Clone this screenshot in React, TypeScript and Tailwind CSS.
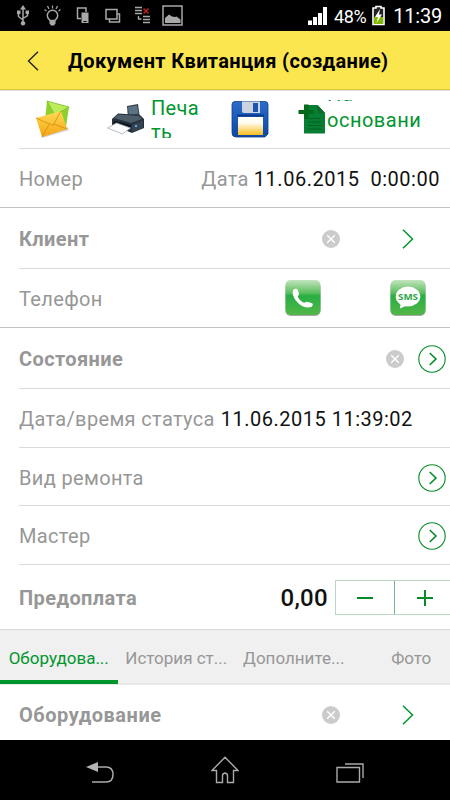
import type { ReactNode } from "react"
import clsx from "clsx"

function StatusBar() {
  return (
    <div className="flex h-[31px] items-center bg-black pl-[15px] pr-2 text-white">
      <svg width="170" height="31" viewBox="0 0 170 31" fill="none" stroke="#a8a8a8" strokeWidth="1.5">
        <path d="M8 8v15M3.500 13v3.500l4.500 3.500M12.500 12v3.500L8 18.500" />
        <path d="M8 5l3 4.500H5z" fill="#a8a8a8" stroke="none" />
        <circle cx="8" cy="23.200" r="2.200" fill="#a8a8a8" stroke="none" />
        <path d="M2 10.500h3.500v3.500H2zM10.500 10.500h3.500v3.500h-3.500z" fill="#a8a8a8" stroke="none" />
        <path d="M35 20.500c-1-1.500-2.700-2.300-2.700-5a5.200 5.200 0 0 1 10.400 0c0 2.700-1.700 3.500-2.700 5z" />
        <path d="M34.500 20.500h6v3l-1.500 2h-3l-1.500-2z" fill="#a8a8a8" stroke="none" />
        <path d="M37.500 5.500v3M32.500 6l1.500 3M42.500 6L41 9M29.500 9.500l2 1.500M45.500 9.500l-2 1.500" strokeWidth="1.200" />
        <path d="M66 18.500h-3.500V8h8.500v4" />
        <path d="M66.500 12.500h7v10.500h-7z" fill="#a8a8a8" stroke="none" />
        <path d="M68.500 21.500h3" stroke="#000" strokeWidth="1" />
        <path d="M91 9.500h11V19H91zM102.500 14h2v8h-10v-2.500" />
        <path d="M120 7.500h7M120 10.500h7M120 13.500h7M128 16.500h7M128 19.500h7M128 22.500h7M123.500 16v3h3" strokeWidth="1.400" />
        <path d="M128.500 8.500l5 5M133.500 8.500l-5 5" stroke="#d32020" strokeWidth="1.300" />
        <path d="M148 6h19v19h-19z" />
        <path d="M150 23v-5l4-3.500 3 2 3 .5 1.500-.5 4 3v3.500z" fill="#a8a8a8" stroke="none" />
      </svg>
      <svg className="ml-auto" width="20" height="31" viewBox="0 0 20 31" fill="#fff">
        <path d="M0 20.500h4V25H0zM5 17h4v8H5zM10 13h4v12h-4zM15 7h4v18h-4z" />
      </svg>
      <span className="ml-[6px] pt-px text-[18px] leading-[31px] tracking-[-0.400px]">48%</span>
      <svg className="ml-[6px]" width="13" height="31" viewBox="0 0 13 31">
        <path d="M1 8h3V6.500h5V8h3v16.500H1z" fill="#222" stroke="#fff" strokeWidth="1.600" />
        <path d="M2 17h9v7H2z" fill="#7fba00" />
        <path d="M8 9l-5 8h3l-1.500 6L10 14.500H7z" fill="#fff" />
      </svg>
      <span className="ml-[8px] pt-[2px] text-[20px] leading-[31px] tracking-[-0.200px]">11:39</span>
    </div>
  )
}

function MailIcon() {
  return (
    <svg width="36" height="40" viewBox="0 0 36 40">
      <defs>
        <linearGradient id="env-y" x1="0" y1="0" x2="0" y2="1">
          <stop offset="0" stopColor="#ffdc55" />
          <stop offset="1" stopColor="#f6a313" />
        </linearGradient>
      </defs>
      <path d="M12 1l22 6-3 20-21-6z" fill="#8ed02e" />
      <path d="M12 1l22 6-14 8z" fill="#bcec5c" stroke="#6fae20" strokeWidth=".6" />
      <path d="M7 38l27-8-1.500-3L8 34z" fill="#777" opacity=".35" />
      <path d="M1 18l25-7 6 18-25 8z" fill="url(#env-y)" />
      <path d="M1 18l17 7.500L26 11M7 37l7-12.500M32 29l-13-5" fill="none" stroke="#d18a0c" strokeWidth=".8" />
    </svg>
  )
}

function PrinterIcon() {
  return (
    <svg width="38" height="40" viewBox="0 0 38 40">
      <path d="M20 6l11-2 2 14-12 1z" fill="#35444f" />
      <path d="M21 7l9-1.500 1.500 8-9.500 1.500z" fill="#5c7385" />
      <path d="M5 19l6-5.500 22 1.500 4 4v9l-12 5-20-8z" fill="#24303b" />
      <path d="M7 18l4-3.500 21 1.500 3 3-11 4z" fill="#4d5e6b" />
      <path d="M8 21l16 4v3L6 24z" fill="#0c1218" />
      <path d="M25 25l11-5v8l-11 4z" fill="#33434f" />
      <circle cx="29" cy="26" r="1.200" fill="#58a9e0" />
      <path d="M.500 28l9-5 14 5-8 6z" fill="#fbfdff" stroke="#9fb0bd" strokeWidth=".8" />
    </svg>
  )
}

function SaveIcon() {
  return (
    <svg width="38" height="40" viewBox="0 0 38 40">
      <defs>
        <linearGradient id="disk" x1="0" y1="0" x2="0" y2="1">
          <stop offset="0" stopColor="#2c6cc8" />
          <stop offset="1" stopColor="#0c48a4" />
        </linearGradient>
        <linearGradient id="disk-label" x1="0" y1="0" x2="0" y2="1">
          <stop offset=".3" stopColor="#fffef4" />
          <stop offset="1" stopColor="#f7bd1e" />
        </linearGradient>
      </defs>
      <path d="M4 1.500h30q3 0 3 3V34l-3 3H5q-4 0-4-4V4.500q0-3 3-3z" fill="url(#disk)" stroke="#123f86" strokeWidth=".8" />
      <path d="M11 1.500h18V13H13q-2 0-2-2z" fill="#ccd4df" />
      <path d="M22 3h5v9h-5z" fill="#1c54ae" />
      <path d="M7 17h25v18H7z" fill="url(#disk-label)" />
      <path d="M6 15.500h27" stroke="#0a3a8c" strokeWidth="2" />
    </svg>
  )
}

function BasedOnIcon() {
  return (
    <svg width="29" height="34" viewBox="0 0 29 34">
      <path d="M6 3h13.500l7.500 8v20.500H6z" fill="#067f35" />
      <path d="M19.500 3v8H27z" fill="#0c6a2a" />
      <path d="M10 16.500h12M10 20h13M10 23.500h13M10 27h13" stroke="#045f24" strokeWidth="1.200" />
      <path d="M6 2.500h4.500v5.500h5v4h-5v5H6v-5H.500V8H6z" fill="#066a1c" />
    </svg>
  )
}

function ClearIcon({ className }: { className?: string }) {
  return (
    <svg className={className} width="18" height="18" viewBox="0 0 18 18">
      <circle cx="9" cy="9" r="9" fill="#cbcbcb" />
      <path d="M5.200 5.200l7.600 7.600M12.800 5.200l-7.600 7.600" stroke="#fff" strokeWidth="1.500" />
    </svg>
  )
}

function Chevron({ className }: { className?: string }) {
  return (
    <svg className={className} width="12" height="20" viewBox="0 0 12 20" fill="none" stroke="#00962e" strokeWidth="1.500">
      <path d="M1 .7L10.500 10 1 19.300" />
    </svg>
  )
}

function RoundChevron({ className }: { className?: string }) {
  return (
    <svg className={className} width="28" height="28" viewBox="0 0 28 28" fill="none" stroke="#058c27">
      <circle cx="14" cy="14" r="13.200" strokeWidth="1.100" />
      <path d="M11.700 8l6.300 6-6.300 6" strokeWidth="1.600" />
    </svg>
  )
}

function CallIcon() {
  return (
    <svg width="36" height="38" viewBox="0 0 36 38">
      <defs>
        <linearGradient id="app-green" x1="0" y1="0" x2="0" y2="1">
          <stop offset="0" stopColor="#c3e4be" />
          <stop offset=".38" stopColor="#58bc5b" />
          <stop offset=".45" stopColor="#27ae43" />
          <stop offset="1" stopColor="#52b748" />
        </linearGradient>
      </defs>
      <rect x=".5" y="2" width="35" height="34" rx="5" fill="#8b8b8b" opacity=".75" />
      <rect x=".5" y="0" width="35" height="35" rx="5" fill="url(#app-green)" />
      <path d="M8.500 9.500c2-1.300 4-1 4.500 1l1 3.500c.3 1.200-1.500 1.800-1 3 1 2.500 3 4.500 5.500 5.500 1.500.7 2-1 3.500-.8l4.500 1.200c2 .6 1.400 2.800 0 3.800-4 2-10 0-13.500-3.700S6 13.500 8.500 9.500z" fill="#fff" />
    </svg>
  )
}

function SmsIcon() {
  return (
    <svg width="36" height="38" viewBox="0 0 36 38">
      <rect x=".5" y="2" width="35" height="34" rx="5" fill="#8b8b8b" opacity=".75" />
      <rect x=".5" y="0" width="35" height="35" rx="5" fill="url(#app-green)" />
      <ellipse cx="18" cy="16.500" rx="12.300" ry="10" fill="#fff" />
      <path d="M10.500 23.500l-.5 5 7-3z" fill="#fff" />
      <text x="18" y="19.800" textAnchor="middle" fontFamily="Open Sans, sans-serif" fontSize="9.500" fontWeight="700" fill="#2fa845" textLength="20" lengthAdjust="spacingAndGlyphs">
        SMS
      </text>
    </svg>
  )
}

type RowProps = {
  label: string
  bold?: boolean
  // full rows close a section, the others have an inset divider
  full?: boolean
  className: string
  children?: ReactNode
}

function Row({ label, bold, full, className, children }: RowProps) {
  return (
    <div className={clsx("shrink-0", full ? "border-b border-[#c4c4c4] pl-[19px]" : "ml-[19px] border-b border-[#dadada]", className)}>
      <div className="flex h-full items-center pt-[2px]">
        <span className={clsx("whitespace-nowrap text-[#979797]", bold ? "font-bold tracking-[0.400px]" : "tracking-[0.350px]")}>{label}</span>
        {children}
      </div>
    </div>
  )
}

const tabs = ["Оборудова...", "История ст...", "Дополните...", "Фото"]

export default function App() {
  return (
    <div className="flex h-[800px] w-[450px] flex-col overflow-hidden bg-white font-['Roboto',sans-serif] text-[20px] leading-6">
      <StatusBar />

      <header className="flex h-[59px] shrink-0 items-center border-b border-[#e5c93c] bg-[#fce650] pl-[27px] pt-[2px]">
        <svg width="12" height="20" viewBox="0 0 12 20" fill="none" stroke="#222" strokeWidth="1.400">
          <path d="M11 .7L1.500 10l9.500 9.300" />
        </svg>
        <h1 className="ml-[29px] whitespace-nowrap text-[20px] font-bold tracking-[0.360px] text-black">Документ Квитанция (создание)</h1>
      </header>

      <div className="h-[59px] shrink-0 border-t border-[#dcdcdc]">
        <div className="ml-[19px] flex h-full items-start border-b border-[#dadada] pt-[9px]">
          <div className="ml-4">
            <MailIcon />
          </div>
          <div className="ml-[36px] flex">
            <PrinterIcon />
            <div className="ml-[6px] h-[38px] w-[56px] overflow-hidden break-all leading-[24px] tracking-[0.350px] text-[#00962e]">
              <div className="-mt-[4px]">Печать</div>
            </div>
          </div>
          <div className="ml-[24px]">
            <SaveIcon />
          </div>
          <div className="ml-[29px] flex">
            <div className="pt-[2px]">
              <BasedOnIcon />
            </div>
            <div className="h-[38px] w-[100px] overflow-hidden whitespace-nowrap leading-[26px] tracking-[0.500px] text-[#00962e]">
              <div className="-mt-[19px]">
                На
                <br />
                основани
              </div>
            </div>
          </div>
        </div>
      </div>

      <Row label="Номер" full className="h-[59px]">
        <span className="ml-auto tracking-[0.350px] text-[#979797]">Дата</span>
        <span className="ml-[5px] mr-[10px] whitespace-pre tracking-[0.520px] text-[#111]">11.06.2015  0:00:00</span>
      </Row>
      <Row label="Клиент" bold className="h-[61px]">
        <ClearIcon className="ml-auto" />
        <Chevron className="ml-[62px] mr-[36px]" />
      </Row>
      <Row label="Телефон" full className="h-[59px]">
        <div className="ml-auto mr-[24px] flex gap-[69px]">
          <CallIcon />
          <SmsIcon />
        </div>
      </Row>
      <Row label="Состояние" bold className="h-[61px]">
        <ClearIcon className="ml-auto" />
        <RoundChevron className="ml-[14px] mr-[4px]" />
      </Row>
      <Row label="Дата/время статуса" className="h-[59px]">
        <span className="ml-[6px] whitespace-nowrap tracking-[0.500px] text-[#111]">11.06.2015 11:39:02</span>
      </Row>
      <Row label="Вид ремонта" className="h-[58px]">
        <RoundChevron className="ml-auto mr-[4px]" />
      </Row>
      <Row label="Мастер" className="h-[59px]">
        <RoundChevron className="ml-auto mr-[4px]" />
      </Row>
      <div className="flex h-[65px] shrink-0 items-center border-b border-[#d9d9d9] pl-[19px]">
        <span className="pt-[2px] font-bold tracking-[0.400px] text-[#979797]">Предоплата</span>
        <span className="ml-auto pt-[2px] text-[24px] font-medium tracking-[0.300px] text-[#111]">0,00</span>
        <div className="ml-[7px] mt-px flex h-[35px] border border-r-0 border-[#b8d8c4]">
          <div className="flex w-[59px] items-center justify-center border-r border-[#7ab390]">
            <svg width="18" height="18" viewBox="0 0 18 18" stroke="#058c27" strokeWidth="2">
              <path d="M1 9h16" />
            </svg>
          </div>
          <div className="flex w-[55px] items-center justify-center pl-[4px]">
            <svg width="18" height="18" viewBox="0 0 18 18" stroke="#058c27" strokeWidth="2">
              <path d="M1 9h16M9 1v16" />
            </svg>
          </div>
        </div>
      </div>

      <nav className="flex h-[55px] shrink-0 border-b-2 border-[#e8e8e8] bg-[#f0f0f0] text-[17px]">
        {tabs.map((tab, i) => (
          <div
            key={tab}
            className={clsx(
              "flex w-[117.500px] shrink-0 items-center justify-center whitespace-nowrap",
              i === 0 ? "-mb-px border-b-4 border-[#00962e] pt-[6px] text-[#00962e]" : "pt-[3px] text-[#979797]"
            )}>
            {tab}
          </div>
        ))}
      </nav>

      <div className="flex h-[55px] shrink-0 items-center pl-[19px] pt-[5px]">
        <span className="font-bold tracking-[0.500px] text-[#979797]">Оборудование</span>
        <ClearIcon className="ml-auto" />
        <Chevron className="ml-[62px] mr-[36px]" />
      </div>

      <footer className="flex h-[60px] shrink-0 items-center justify-between bg-black pl-[86px] pr-[86px]">
        <svg width="28" height="30" viewBox="0 0 28 30" fill="none" stroke="#aaa" strokeWidth="1.500">
          <path d="M11 12h9q7 0 7 7.500T20 27H6" />
          <path d="M0 12l12-5v10z" fill="#b4b4b4" stroke="none" />
        </svg>
        <svg width="28" height="30" viewBox="0 0 28 30" fill="none" stroke="#aaa" strokeWidth="1.400">
          <path d="M14 2.200L27 15.500h-4.500V27.500h-6v-7q0-2-2.500-2.500-2.500.5-2.500 2.500v7h-6v-12H1z" />
        </svg>
        <svg width="28" height="30" viewBox="0 0 28 30" fill="none" stroke="#aaa" strokeWidth="1.400">
          <path d="M1 12.500h22.500V27H1zM9 9h18v14" />
        </svg>
      </footer>
    </div>
  )
}
